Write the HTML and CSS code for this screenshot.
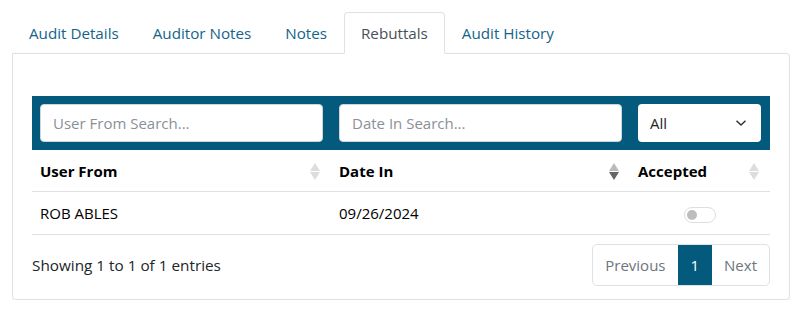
FILE: index.html
```html
<!DOCTYPE html>
<html>
<head>
  <meta name="viewport" content="width=device-width, initial-scale=1">
  <link rel="stylesheet" href="styles.css">
</head>
<body>
  <ul class="tabs">
    <li><a class="tab">Audit Details</a></li>
    <li><a class="tab">Auditor Notes</a></li>
    <li><a class="tab">Notes</a></li>
    <li><a class="tab active">Rebuttals</a></li>
    <li><a class="tab">Audit History</a></li>
  </ul>

  <div class="card">
    <div class="filters">
      <input type="text" class="search" placeholder="User From Search...">
      <input type="text" class="search" placeholder="Date In Search...">
      <div class="select">
        <span>All</span>
        <svg width="12" height="8" viewBox="0 0 12 8"><path d="M1.5 1.8 L6 6 L10.5 1.8" fill="none" stroke="#333" stroke-width="1.5"/></svg>
      </div>
    </div>

    <table class="grid">
      <thead>
        <tr>
          <th class="col-user">User From <span class="sort"></span></th>
          <th class="col-date">Date In <span class="sort desc"></span></th>
          <th class="col-acc">Accepted <span class="sort"></span></th>
        </tr>
      </thead>
      <tbody>
        <tr>
          <td>ROB ABLES</td>
          <td>09/26/2024</td>
          <td class="center"><span class="toggle"><span class="knob"></span></span></td>
        </tr>
      </tbody>
    </table>

    <div class="footer">
      <div class="info">Showing 1 to 1 of 1 entries</div>
      <div class="pager">
        <a class="page-btn">Previous</a>
        <a class="page-btn current">1</a>
        <a class="page-btn">Next</a>
      </div>
    </div>
  </div>
</body>
</html>
```

FILE: styles.css
```css
body {
  margin: 12px 9px 0 12px;
  font-family: "Open Sans", "Noto Sans", sans-serif;
  font-size: 15px;
  color: #212529;
  background: #fff;
}

.tabs {
  list-style: none;
  margin: 0;
  padding: 0;
  display: flex;
  position: relative;
  z-index: 1;
}

.tab {
  display: block;
  padding: 10px 16px 9px;
  line-height: 21px;
  font-size: 15.2px;
  color: #14648a;
  border: 1px solid transparent;
  border-radius: 4px 4px 0 0;
}

.tab.active {
  color: #495057;
  background: #fff;
  border-color: #dee2e6 #dee2e6 #fff;
}

.card {
  margin-top: -1px;
  border: 1px solid #dee2e6;
  border-radius: 0 4px 4px 4px;
  box-shadow: 0 1px 3px rgba(0, 0, 0, 0.12);
  padding: 42px 19px 13px;
}

.filters {
  background: #045a7c;
  padding: 8px 9px 8px 8px;
  display: flex;
  gap: 16px;
}

.search {
  width: 283px;
  height: 38px;
  box-sizing: border-box;
  border: 1px solid #ced4da;
  border-radius: 4px;
  padding: 6px 12px;
  font-family: inherit;
  font-size: 15px;
  color: #495057;
}

.search::placeholder { color: #8a9097; }

.select {
  flex: 1;
  height: 38px;
  box-sizing: border-box;
  background: #fff;
  border-radius: 4px;
  padding: 0 14px 0 12px;
  display: flex;
  align-items: center;
  justify-content: space-between;
  font-size: 15px;
  color: #212529;
}

.grid {
  width: 100%;
  border-collapse: collapse;
}

.grid th, .grid td {
  padding: 0 8px;
  text-align: left;
  border-bottom: 1px solid #dee2e6;
}

.grid th {
  height: 41px;
  font-weight: 700;
  color: #000;
  position: relative;
}

.grid td { height: 42px; color: #000; }

.col-user, .col-date { width: 283px; }

.center { text-align: center !important; }

.sort {
  position: absolute;
  right: 11px;
  top: 13px;
  width: 10px;
  height: 17px;
}

.sort::before, .sort::after {
  content: "";
  position: absolute;
  left: 0;
  border-left: 5px solid transparent;
  border-right: 5px solid transparent;
}

.sort::before { top: 0; border-bottom: 8px solid #ddd; }
.sort::after  { top: 9px; border-top: 8px solid #ddd; }
.sort.desc::before { border-bottom-color: #bbb; }
.sort.desc::after { border-top-color: #666; }

.toggle {
  display: inline-block;
  vertical-align: middle;
  width: 30px;
  height: 14px;
  border: 1px solid #dedede;
  border-radius: 8px;
  position: relative;
}

.knob {
  position: absolute;
  left: 2px;
  top: 2px;
  width: 10px;
  height: 10px;
  border-radius: 50%;
  background: #bdbdbd;
}

.footer {
  display: flex;
  justify-content: space-between;
  align-items: center;
  margin-top: 9px;
}

.info { font-size: 15.3px; }

.pager {
  display: flex;
  border: 1px solid #dee2e6;
  border-radius: 5px;
  overflow: hidden;
}

.page-btn {
  display: block;
  height: 40px;
  line-height: 40px;
  padding: 0 12px;
  font-size: 15px;
  color: #6c757d;
}

.page-btn.current {
  background: #045a7c;
  color: #fff;
  padding: 0 13px;
}
```
